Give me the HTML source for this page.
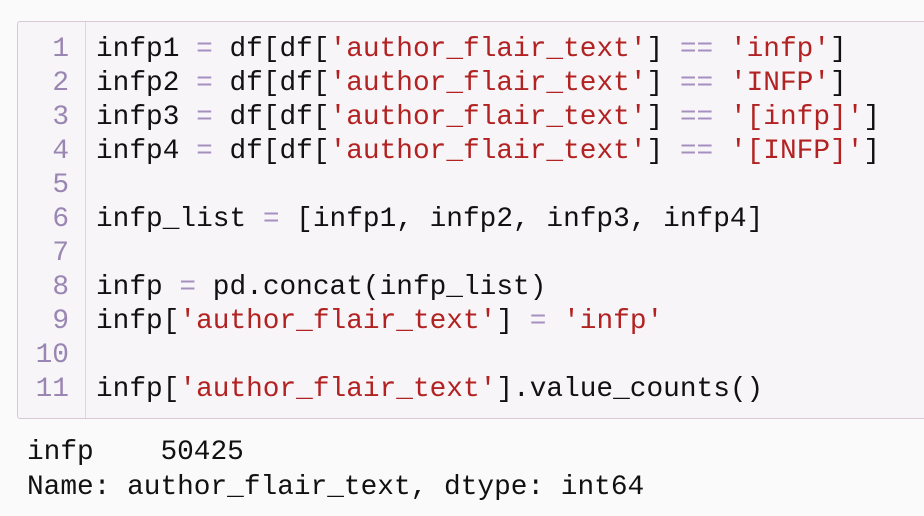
<!DOCTYPE html>
<html><head><style>
body{margin:0;background:#fbfafb;width:924px;height:516px;overflow:hidden;position:relative;font-family:"Liberation Mono",monospace;font-size:27.8px;font-weight:normal;color:#111}
.box{position:absolute;left:17px;top:21px;width:920px;height:396px;border:1px solid #d8c8d2;border-radius:3px;background:#f7f5f7}
.gut{position:absolute;left:0;top:0;width:67px;height:396px;border-right:1px solid #e2d6dd}
.ln{position:absolute;left:0;width:51px;text-align:right;color:#9a86b2;line-height:34px}
.code{position:absolute;left:78px;white-space:pre;line-height:34px}
.o{color:#a58fc0}.s{color:#b22222}
.out{position:absolute;left:27px;white-space:pre;line-height:35px;top:435px;color:#111}
</style></head><body>
<div class="box">
<div class="gut"></div>
<div class="ln" style="top:11px">1<br>2<br>3<br>4<br>5<br>6<br>7<br>8<br>9<br>10<br>11</div>
<div class="code" style="top:11px">infp1 <span class="o">=</span> df[df[<span class="s">'author_flair_text'</span>] <span class="o">==</span> <span class="s">'infp'</span>]
infp2 <span class="o">=</span> df[df[<span class="s">'author_flair_text'</span>] <span class="o">==</span> <span class="s">'INFP'</span>]
infp3 <span class="o">=</span> df[df[<span class="s">'author_flair_text'</span>] <span class="o">==</span> <span class="s">'[infp]'</span>]
infp4 <span class="o">=</span> df[df[<span class="s">'author_flair_text'</span>] <span class="o">==</span> <span class="s">'[INFP]'</span>]

infp_list <span class="o">=</span> [infp1, infp2, infp3, infp4]

infp <span class="o">=</span> pd.concat(infp_list)
infp[<span class="s">'author_flair_text'</span>] <span class="o">=</span> <span class="s">'infp'</span>

infp[<span class="s">'author_flair_text'</span>].value_counts()</div>
</div>
<div class="out">infp    50425
Name: author_flair_text, dtype: int64</div>
</body></html>
